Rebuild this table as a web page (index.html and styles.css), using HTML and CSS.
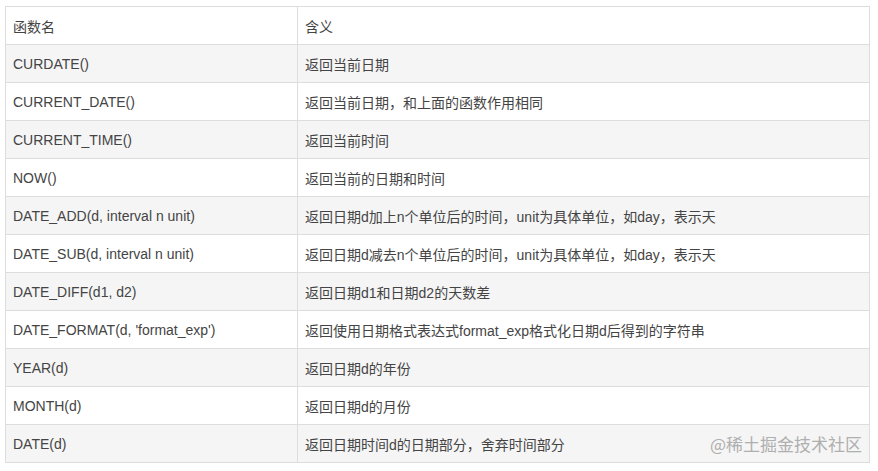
FILE: index.html
```html
<!DOCTYPE html>
<html lang="zh">
<head>
<meta charset="utf-8">
<link rel="stylesheet" href="styles.css">
</head>
<body>
<div class="wrap">
<table class="fn-table">
<thead>
<tr><th class="c1">函数名</th><th>含义</th></tr>
</thead>
<tbody>
<tr><td>CURDATE()</td><td>返回当前日期</td></tr>
<tr><td>CURRENT_DATE()</td><td>返回当前日期，和上面的函数作用相同</td></tr>
<tr><td>CURRENT_TIME()</td><td>返回当前时间</td></tr>
<tr><td>NOW()</td><td>返回当前的日期和时间</td></tr>
<tr><td>DATE_ADD(d, interval n unit)</td><td>返回日期d加上n个单位后的时间，unit为具体单位，如day，表示天</td></tr>
<tr><td>DATE_SUB(d, interval n unit)</td><td>返回日期d减去n个单位后的时间，unit为具体单位，如day，表示天</td></tr>
<tr><td>DATE_DIFF(d1, d2)</td><td>返回日期d1和日期d2的天数差</td></tr>
<tr><td>DATE_FORMAT(d, 'format_exp')</td><td>返回使用日期格式表达式format_exp格式化日期d后得到的字符串</td></tr>
<tr><td>YEAR(d)</td><td>返回日期d的年份</td></tr>
<tr><td>MONTH(d)</td><td>返回日期d的月份</td></tr>
<tr><td>DATE(d)</td><td>返回日期时间d的日期部分，舍弃时间部分</td></tr>
</tbody>
</table>
<div class="watermark">@稀土掘金技术社区</div>
</div>
</body>
</html>
```
FILE: styles.css
```css
html, body {
  margin: 0;
  padding: 0;
  background: #ffffff;
}
.wrap {
  position: relative;
  padding: 6px 0 0 5px;
}
.fn-table {
  border-collapse: collapse;
  width: 865px;
  table-layout: fixed;
  font-family: "Liberation Sans", Arial, "Noto Sans CJK SC", sans-serif;
  font-size: 14px;
  color: #444444;
  text-spacing-trim: space-all;
}
.fn-table th,
.fn-table td {
  border: 1px solid #dddddd;
  height: 37px;
  padding: 0 7px;
  text-align: left;
  font-weight: normal;
  vertical-align: middle;
  box-sizing: border-box;
  white-space: nowrap;
}
.fn-table tr {
  height: 38px;
}
.fn-table .c1 {
  width: 292px;
}
.fn-table tbody tr:nth-child(odd) {
  background: #f5f5f5;
}
.watermark {
  position: absolute;
  right: 16px;
  top: 431px;
  font-family: "Noto Sans CJK SC", sans-serif;
  font-size: 17px;
  color: #a8a8a8;
  opacity: 0.9;
}
```
